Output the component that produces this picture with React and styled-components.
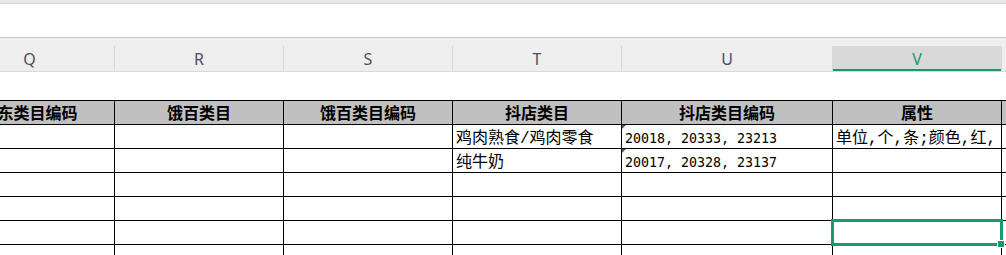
import React from 'react';
import styled, { createGlobalStyle } from 'styled-components';

const GREEN = '#1a9a6b';
const COLS = '170px 169px 169px 169px 211px 169px 60px';

const GlobalStyle = createGlobalStyle`
  html, body {
    margin: 0;
    padding: 0;
    background: #fff;
    overflow: hidden;
  }
`;

const Page = styled.div`
  width: 1006px;
  height: 255px;
  overflow: hidden;
  font-family: "Noto Sans CJK SC", sans-serif;
`;

const TopStrip = styled.div`
  height: 3px;
  background: #e9e9e9;
  border-bottom: 1px solid #d3d3d3;
`;

const FormulaArea = styled.div`
  height: 33px;
  background: #fff;
  border-bottom: 1px solid #c8c8c8;
`;

const ColumnBar = styled.div`
  display: grid;
  grid-template-columns: ${COLS};
  margin-left: -55px;
  padding-top: 8px;
  background: #eeeeee;
  border-bottom: 1px solid #d9d9d9;
`;

const ColHead = styled.div`
  height: 25px;
  box-sizing: border-box;
  display: flex;
  align-items: center;
  justify-content: center;
  padding-top: 1px;
  border-right: 1px solid #d8d8d8;
  font-family: "Noto Sans", sans-serif;
  font-size: 16px;
  color: ${p => (p.$active ? GREEN : '#4a505a')};
  background: ${p => (p.$active ? '#d9d9d9' : 'transparent')};
  box-shadow: ${p => (p.$active ? `inset 0 -2px 0 ${GREEN}` : 'none')};
`;

const Gap = styled.div`
  height: 28px;
`;

const Sheet = styled.div`
  display: grid;
  grid-template-columns: ${COLS};
  grid-auto-rows: 24px;
  margin-left: -55px;
  border-top: 1px solid #000;
`;

const Cell = styled.div`
  position: relative;
  box-sizing: border-box;
  height: 24px;
  border-right: 1px solid #000;
  border-bottom: 1px solid #000;
  display: flex;
  align-items: flex-end;
  justify-content: ${p => (p.$head ? 'center' : 'flex-start')};
  padding: 0 0 1px 3px;
  overflow: ${p => (p.$selected ? 'visible' : 'hidden')};
  white-space: nowrap;
  background: ${p => (p.$head ? '#c0c0c0' : '#fff')};
  font-family: ${p => (p.$mono ? '"DejaVu Sans Mono", monospace' : '"Liberation Mono", "Noto Sans CJK SC", sans-serif')};
  font-size: ${p => (p.$mono ? '13.3px' : '16px')};
  font-weight: ${p => (p.$head ? 700 : 400)};
  line-height: 16px;
  color: #000;
  ${p => p.$head && 'padding-left: 0;'}
`;

const Flag = styled.span`
  position: absolute;
  left: 0;
  top: 0;
  width: 0;
  height: 0;
  border-top: 4px solid #1f7a2e;
  border-right: 4px solid transparent;
`;

const Selection = styled.span`
  position: absolute;
  left: -2px;
  top: -2px;
  width: 172px;
  height: 27px;
  box-sizing: border-box;
  border: 3px solid ${GREEN};
  z-index: 2;
  pointer-events: none;
`;

const Handle = styled.span`
  position: absolute;
  right: -5px;
  bottom: -5px;
  width: 8px;
  height: 8px;
  box-sizing: border-box;
  background: ${GREEN};
  border: 1px solid #fff;
`;

const letters = ['Q', 'R', 'S', 'T', 'U', 'V', 'W'];
const heads = ['京东类目编码', '饿百类目', '饿百类目编码', '抖店类目', '抖店类目编码', '属性', ''];

const rows = [
  { t: '鸡肉熟食/鸡肉零食', u: '20018, 20333, 23213', v: '单位,个,条;颜色,红,' },
  { t: '纯牛奶', u: '20017, 20328, 23137', v: '' },
  { t: '', u: '', v: '' },
  { t: '', u: '', v: '' },
  { t: '', u: '', v: '', selected: true },
  { t: '', u: '', v: '' },
];

export default function App() {
  return (
    <Page>
      <GlobalStyle />
      <TopStrip />
      <FormulaArea />
      <ColumnBar>
        {letters.map(l => (
          <ColHead key={l} $active={l === 'V'}>{l === 'W' ? '' : l}</ColHead>
        ))}
      </ColumnBar>
      <Gap />
      <Sheet>
        {heads.map((h, i) => (
          <Cell key={'h' + i} $head>{h}</Cell>
        ))}
        {rows.map((r, i) => (
          <React.Fragment key={i}>
            <Cell />
            <Cell />
            <Cell />
            <Cell>{r.t}</Cell>
            <Cell $mono>
              {r.u && <Flag />}
              {r.u}
            </Cell>
            <Cell $selected={r.selected}>
              {r.v}
              {r.selected && (
                <Selection>
                  <Handle />
                </Selection>
              )}
            </Cell>
            <Cell />
          </React.Fragment>
        ))}
      </Sheet>
    </Page>
  );
}
